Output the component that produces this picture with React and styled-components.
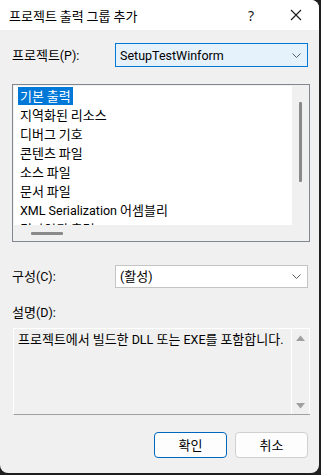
import React from "react";
import styled, { createGlobalStyle } from "styled-components";

const GlobalStyle = createGlobalStyle`
  html, body {
    margin: 0;
    padding: 0;
    background: #1f1f1f;
  }
  body {
    font-family: "Noto Sans CJK KR", sans-serif;
    font-size: 13px;
    color: #000;
  }
`;

const Screen = styled.div`
  width: 321px;
  height: 475px;
  background: #1f1f1f;
  overflow: hidden;
`;

const Window = styled.div`
  width: 319px;
  height: 473px;
  background: #f0f0f0;
  border-radius: 0 8px 8px 8px;
  overflow: hidden;
  display: flex;
  flex-direction: column;
`;

const TitleBar = styled.div`
  height: 30px;
  background: #fff;
  display: flex;
  align-items: center;
  flex-shrink: 0;
`;

const Title = styled.div`
  flex: 1;
  padding-left: 9px;
`;

const TitleButton = styled.div`
  width: ${p => p.w}px;
  height: 30px;
  display: flex;
  align-items: center;
  justify-content: center;
  font-family: "Noto Sans", sans-serif;
  font-size: 14px;
  color: #1a1a1a;
`;

const Body = styled.div`
  flex: 1;
  padding: 0 11px 0 12px;
  display: flex;
  flex-direction: column;
`;

const FieldRow = styled.div`
  display: flex;
  align-items: center;
  margin-top: ${p => p.mt}px;
`;

const Label = styled.div`
  width: 103px;
  line-height: 16px;
  margin-top: ${p => p.mt || 0}px;
`;

const Combo = styled.div`
  flex: 1;
  height: ${p => p.h}px;
  box-sizing: border-box;
  border: 1px solid ${p => (p.active ? "#0078d7" : "#c4c4c4")};
  background: ${p => (p.active ? "#e5f1fb" : "#fff")};
  display: flex;
  align-items: center;
  padding-left: 4px;
`;

const ComboText = styled.div`
  flex: 1;
  line-height: 16px;
`;

const Chevron = styled.svg`
  width: 9px;
  height: 5px;
  margin-right: 6px;
`;

const ListBox = styled.div`
  margin-top: 17px;
  width: 298px;
  height: 158px;
  box-sizing: border-box;
  border: 1px solid #828790;
  background: #f0f0f0;
  display: grid;
  grid-template-columns: 1fr 17px;
  grid-template-rows: 1fr 16px;
  padding: 1px 0 0 1px;
`;

const ListContent = styled.div`
  background: #fff;
  overflow: hidden;
  padding-left: 4px;
`;

const ListItem = styled.div`
  height: 19px;
  display: flex;
  align-items: center;
`;

const ItemText = styled.span`
  padding: 0 2px;
  height: 18px;
  line-height: 18px;
  white-space: nowrap;
  background: ${p => (p.selected ? "#0078d7" : "transparent")};
  color: ${p => (p.selected ? "#fff" : "#000")};
`;

const Latin = styled.span`
  font-family: Roboto, "Noto Sans", sans-serif;
  font-size: 12.5px;
`;

const VScroll = styled.div`
  display: flex;
  justify-content: center;
  padding-top: 16px;
`;

const VThumb = styled.div`
  width: 3px;
  height: 80px;
  background: #8a8a8a;
  border-radius: 1px;
`;

const HScroll = styled.div`
  display: flex;
  align-items: center;
  padding-left: 17px;
`;

const HThumb = styled.div`
  width: 32px;
  height: 3px;
  background: #8a8a8a;
  border-radius: 1px;
`;

const DescBox = styled.div`
  margin-top: 7px;
  margin-left: 1px;
  width: 297px;
  height: 87px;
  box-sizing: border-box;
  border: 1px solid #fff;
  border-bottom-color: #a0a0a0;
  border-right: none;
  display: flex;
`;

const DescText = styled.div`
  flex: 1;
  padding: 2px 0 0 4px;
  line-height: 16px;
  white-space: nowrap;
  border-right: 1px solid #fff;
`;

const DescScroll = styled.div`
  width: 17px;
  display: flex;
  flex-direction: column;
  justify-content: space-between;
  align-items: center;
  padding: 6px 0 5px;
  border-right: 1px solid #fff;
`;

const Arrow = styled.svg`
  width: 9px;
  height: 6px;
`;

const Buttons = styled.div`
  margin-top: 17px;
  display: flex;
  justify-content: flex-end;
  gap: 8px;
`;

const Button = styled.div`
  width: 73px;
  height: 26px;
  box-sizing: border-box;
  border: 1px solid ${p => (p.primary ? "#0067c0" : "#d0d0d0")};
  border-radius: 4px;
  background: #fdfdfd;
  display: flex;
  align-items: center;
  justify-content: center;
  line-height: 16px;
`;

// Hangul runs keep the CJK face, everything else uses a Segoe-like Latin face
function T({ children }) {
  const parts = String(children).split(/([\uAC00-\uD7A3\u3131-\u318E]+(?: [\uAC00-\uD7A3\u3131-\u318E]+)*)/);
  return parts.map((p, i) =>
    !p ? null : /[\uAC00-\uD7A3]/.test(p) ? <React.Fragment key={i}>{p}</React.Fragment> : <Latin key={i}>{p}</Latin>
  );
}

const items = [
  "기본 출력",
  "지역화된 리소스",
  "디버그 기호",
  "콘텐츠 파일",
  "소스 파일",
  "문서 파일",
  "XML Serialization 어셈블리",
  "컴파일된 출력",
];

function ChevronIcon() {
  return (
    <Chevron viewBox="0 0 9 5">
      <path d="M0.5 0.5 L4.5 4.5 L8.5 0.5" fill="none" stroke="#5a5a5a" strokeWidth="1" />
    </Chevron>
  );
}

export default function App() {
  return (
    <Screen>
      <GlobalStyle />
      <Window>
        <TitleBar>
          <Title>프로젝트 출력 그룹 추가</Title>
          <TitleButton w={44}>?</TitleButton>
          <TitleButton w={46}>
            <svg width="12" height="12" viewBox="0 0 12 12">
              <path d="M1 1 L11 11 M11 1 L1 11" stroke="#1a1a1a" strokeWidth="1.1" />
            </svg>
          </TitleButton>
        </TitleBar>
        <Body>
          <FieldRow mt={13}>
            <Label><T>프로젝트(P):</T></Label>
            <Combo active h={24}>
              <ComboText><T>SetupTestWinform</T></ComboText>
              <ChevronIcon />
            </Combo>
          </FieldRow>

          <ListBox>
            <ListContent>
              {items.map((it, i) => (
                <ListItem key={i}>
                  <ItemText selected={i === 0}><T>{it}</T></ItemText>
                </ListItem>
              ))}
            </ListContent>
            <VScroll>
              <VThumb />
            </VScroll>
            <HScroll>
              <HThumb />
            </HScroll>
            <div />
          </ListBox>

          <FieldRow mt={23}>
            <Label><T>구성(C):</T></Label>
            <Combo h={23}>
              <ComboText><T>(활성)</T></ComboText>
              <ChevronIcon />
            </Combo>
          </FieldRow>

          <Label mt={16}><T>설명(D):</T></Label>
          <DescBox>
            <DescText><T>프로젝트에서 빌드한 DLL 또는 EXE를 포함합니다.</T></DescText>
            <DescScroll>
              <Arrow viewBox="0 0 9 6">
                <path d="M0 6 L4.5 0.5 L9 6 Z" fill="#a0a0a0" />
              </Arrow>
              <Arrow viewBox="0 0 9 6">
                <path d="M0 0 L4.5 5.5 L9 0 Z" fill="#a0a0a0" />
              </Arrow>
            </DescScroll>
          </DescBox>

          <Buttons>
            <Button primary>확인</Button>
            <Button>취소</Button>
          </Buttons>
        </Body>
      </Window>
    </Screen>
  );
}
